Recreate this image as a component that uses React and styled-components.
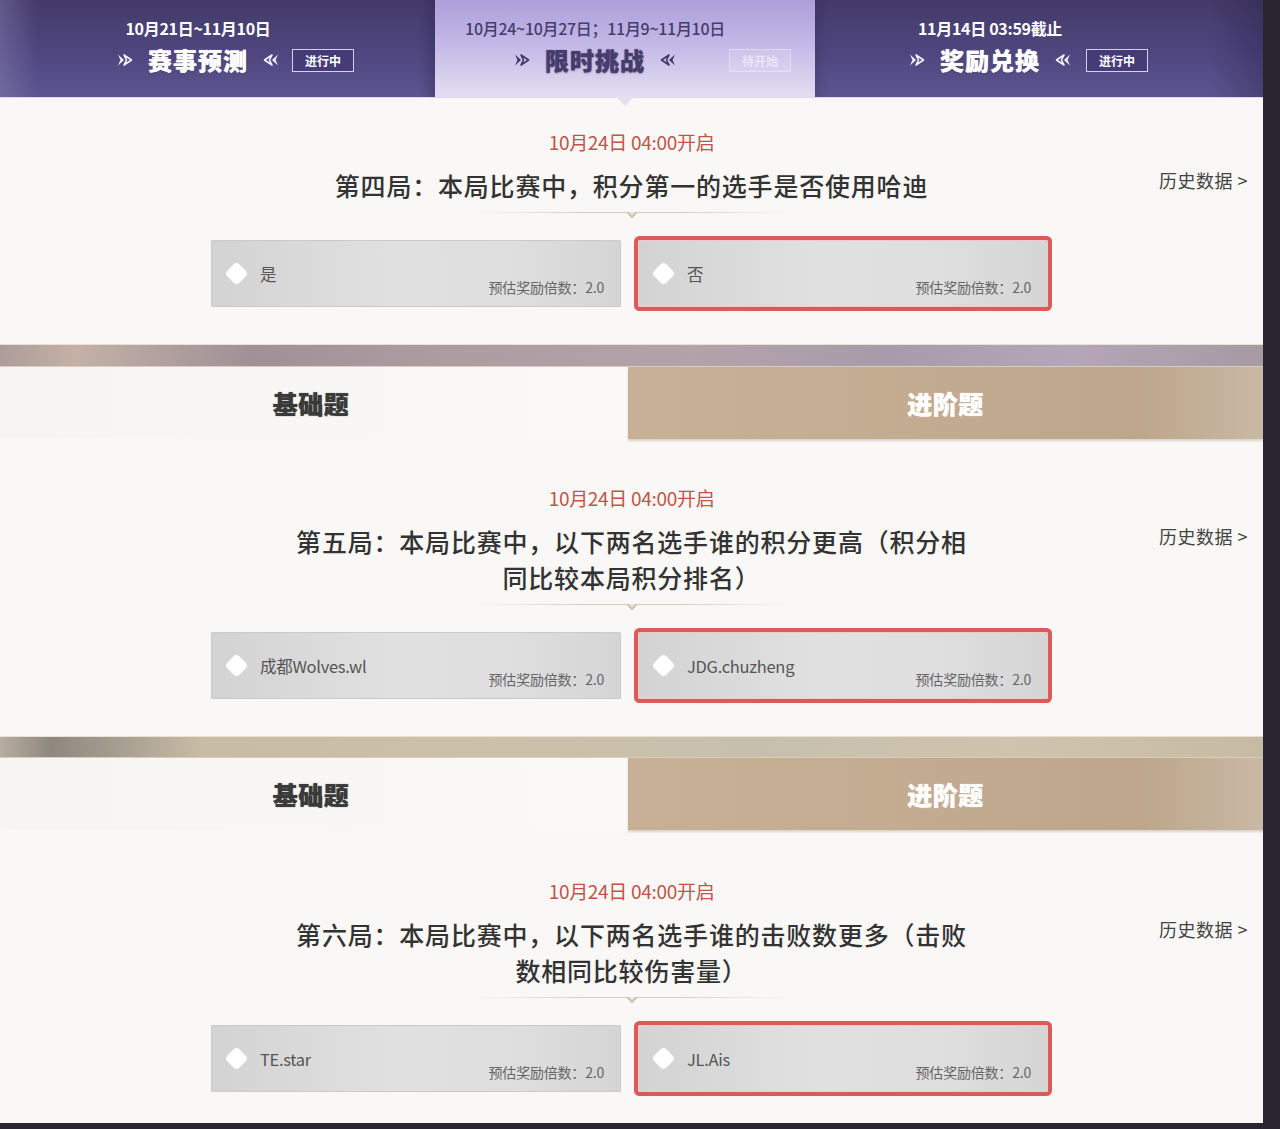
import React from "react";
import styled, { createGlobalStyle, css } from "styled-components";

const GlobalStyle = createGlobalStyle`
  html, body { margin: 0; padding: 0; background: #2a2630; }
  body { font-family: "Noto Sans CJK SC", "Noto Sans", sans-serif; }
  * { box-sizing: border-box; }
`;

const Page = styled.div`
  width: 1280px;
  height: 1129px;
  display: flex;
  background: #2a2630;
  overflow: hidden;
`;

const Main = styled.div`
  width: 1263px;
  height: 1123px;
  background: #f9f8f6;
  overflow: hidden;
  display: flex;
  flex-direction: column;
`;

const Header = styled.div`
  display: grid;
  grid-template-columns: 435px 380px 1fr;
  height: 98px;
  border-bottom: 1px solid #ddd8e6;
  flex-shrink: 0;
`;

const Tab = styled.div`
  position: relative;
  display: flex;
  flex-direction: column;
  align-items: center;
  padding-top: 17px;
  padding-right: ${(p) => p.$shift}px;
  ${(p) =>
    p.$active
      ? css`
          background: linear-gradient(180deg, #ae9fdb 0%, #c3b8e6 45%, #e2def1 100%);
          color: #463c6e;
        `
      : css`
          background:
            linear-gradient(90deg, ${p.$edgeL} 0, transparent ${p.$edgeLw}px, transparent calc(100% - ${p.$edgeRw}px), ${p.$edgeR} 100%),
            linear-gradient(180deg, #433a68 0%, #4f4680 55%, #5c5590 100%);
          color: #ffffff;
        `}
`;

const Pointer = styled.svg`
  position: absolute;
  left: 50%;
  bottom: -9px;
  transform: translateX(-50%);
  z-index: 2;
`;

const DateText = styled.div`
  font-size: 16px;
  line-height: 22px;
  font-weight: ${(p) => (p.$active ? 500 : 700)};
  letter-spacing: -0.3px;
  white-space: nowrap;
`;

const TitleRow = styled.div`
  position: relative;
  margin-top: 6px;
  height: 30px;
  display: flex;
  align-items: center;
  gap: 15px;
`;

const TabTitle = styled.div`
  font-size: 24px;
  line-height: 30px;
  font-weight: 900;
  letter-spacing: 1px;
  text-shadow: 0 0 1px currentColor, 0 1px 2px rgba(0, 0, 0, 0.25);
`;

const Badge = styled.div`
  position: absolute;
  left: calc(100% + ${(p) => p.$offset}px);
  top: 4px;
  width: 62px;
  height: 23px;
  display: flex;
  align-items: center;
  justify-content: center;
  font-size: 12px;
  font-weight: 700;
  ${(p) =>
    p.$muted
      ? css`
          border: 1px solid rgba(255, 255, 255, 0.35);
          background: rgba(255, 255, 255, 0.12);
          color: rgba(255, 255, 255, 0.55);
        `
      : css`
          border: 1px solid #d6cff0;
          background: rgba(62, 52, 110, 0.6);
          color: #ffffff;
        `}
`;

const Section = styled.div`
  padding-top: ${(p) => p.$pt}px;
  padding-bottom: ${(p) => p.$pb}px;
  display: flex;
  flex-direction: column;
  flex-shrink: 0;
`;

const TimeText = styled.div`
  text-align: center;
  font-size: 19px;
  line-height: 20px;
  color: #c25349;
  letter-spacing: -0.3px;
`;

const QuestionRow = styled.div`
  margin-top: 15px;
  display: grid;
  grid-template-columns: 1fr 684px 1fr;
`;

const QuestionText = styled.div`
  grid-column: 2;
  text-align: center;
  font-size: 25px;
  line-height: 36px;
  font-weight: 500;
  letter-spacing: 0.8px;
  color: #333;
`;

const History = styled.div`
  grid-column: 3;
  justify-self: end;
  align-self: start;
  margin-top: 1px;
  padding-right: 15px;
  font-size: 18px;
  line-height: 24px;
  letter-spacing: 0.5px;
  color: #444;
  white-space: nowrap;
`;

const Divider = styled.div`
  position: relative;
  margin: 8px auto 0;
  width: 320px;
  height: 8px;
  border-top: 1px solid transparent;
  background:
    linear-gradient(90deg, rgba(205, 195, 175, 0) 0%, #d7cdbb 35%, #d7cdbb 65%, rgba(205, 195, 175, 0) 100%) top / 100% 1px no-repeat;
  display: flex;
  justify-content: center;
`;

const Options = styled.div`
  margin-top: 21px;
  padding-right: 4px;
  display: flex;
  justify-content: center;
  gap: 17px;
`;

const Option = styled.div`
  width: 410px;
  height: 67px;
  display: grid;
  grid-template-columns: auto 1fr auto;
  align-items: center;
  padding: 0 16px 0 16px;
  background: linear-gradient(90deg, #d3d3d3 0%, #e1e1e1 45%, #dedede 75%, #d5d5d5 100%);
  border: 1px solid ${(p) => (p.$selected ? "#f1c9c9" : "#cacaca")};
  border-radius: ${(p) => (p.$selected ? "2px" : "1px")};
  box-shadow: ${(p) => (p.$selected ? "0 0 0 4px #db5b5b" : "none")};
`;

const Diamond = styled.div`
  width: 17px;
  height: 17px;
  background: #fff;
  border-radius: 4px;
  transform: rotate(45deg);
`;

const OptionLabel = styled.div`
  padding-left: 15px;
  font-size: 16.5px;
  color: #555;
  letter-spacing: -0.3px;
`;

const Reward = styled.div`
  align-self: end;
  margin-bottom: 9px;
  font-size: 14px;
  color: #666;
  letter-spacing: -0.2px;
`;

const Band = styled.div`
  height: ${(p) => p.$h}px;
  flex-shrink: 0;
  border-top: 1px solid #e9dfd2;
  border-bottom: 1px solid #d9cdbb;
  background: ${(p) =>
    p.$tone === "violet"
      ? "linear-gradient(90deg, #ad9c98 0%, #c4b2a6 6%, #b3a29f 12%, #9f9197 20%, #ab9da2 35%, #b2a3aa 55%, #a99bab 70%, #b5a5b8 85%, #a79aa3 100%)"
      : "linear-gradient(90deg, #b8ada0 0%, #8f8880 4%, #a59c90 9%, #c8bca4 16%, #cbc0a8 40%, #c7bfae 60%, #cfc4ad 80%, #c7baa3 100%)"};
`;

const LevelTabs = styled.div`
  display: grid;
  grid-template-columns: 628px 1fr;
  height: 72px;
  flex-shrink: 0;
  background: linear-gradient(90deg, #f6f5f3 0%, #faf9f8 50%, #f8f7f5 100%);
`;

const LevelTab = styled.div`
  display: flex;
  align-items: center;
  justify-content: center;
  padding-right: ${(p) => p.$pr}px;
  font-size: 25px;
  font-weight: 900;
  letter-spacing: 0.5px;
  ${(p) =>
    p.$active
      ? css`
          color: #fff;
          background: linear-gradient(90deg, #c8b096 0%, #c4ac91 40%, #bda68b 80%, #c9b8a4 100%);
          box-shadow: 0 2px 2px rgba(120, 100, 80, 0.25);
          text-shadow: 0 0 1px #fff;
        `
      : css`
          color: #3a3a3a;
          text-shadow: 0 0 1px #3a3a3a;
        `}
`;

const Arrow = ({ dir = "right", color }) => (
  <svg width="16" height="14" viewBox="0 0 16 14" style={{ transform: dir === "left" ? "scaleX(-1)" : "none" }}>
    <path d="M1 1.5 L7 7 L1 12.5 L3.5 7 Z" fill={color} />
    <path d="M7 2 L14.5 7 L7 12 L9.5 7 Z" fill="none" stroke={color} strokeWidth="1.6" strokeLinejoin="round" />
  </svg>
);

const DividerMark = () => (
  <svg width="14" height="8" viewBox="0 0 14 8">
    <path d="M1 0 L7 6.5 L13 0 Z" fill="#cdc2b2" />
    <path d="M4 0 L7 3.4 L10 0 Z" fill="#eee8df" />
  </svg>
);

const headerTabs = [
  { date: "10月21日~11月10日", title: "赛事预测", badge: "进行中", shift: 39, offset: 13, edgeL: "rgba(150,145,190,0.35)", edgeLw: 38, edgeR: "rgba(30,24,60,0.25)", edgeRw: 16 },
  { date: "10月24~10月27日；11月9~11月10日", title: "限时挑战", badge: "待开始", shift: 60, offset: 53, active: true },
  { date: "11月14日 03:59截止", title: "奖励兑换", badge: "进行中", shift: 98, offset: 15, edgeL: "rgba(30,24,60,0.15)", edgeLw: 14, edgeR: "rgba(30,24,60,0.3)", edgeRw: 53 },
];

const questions = [
  {
    pt: 34,
    pb: 37,
    text: "第四局：本局比赛中，积分第一的选手是否使用哈迪",
    options: ["是", "否"],
  },
  {
    pt: 49,
    pb: 37,
    text: "第五局：本局比赛中，以下两名选手谁的积分更高（积分相同比较本局积分排名）",
    options: ["成都Wolves.wl", "JDG.chuzheng"],
  },
  {
    pt: 51,
    pb: 31,
    text: "第六局：本局比赛中，以下两名选手谁的击败数更多（击败数相同比较伤害量）",
    options: ["TE.star", "JL.Ais"],
  },
];

const QuestionSection = ({ q }) => (
  <Section $pt={q.pt} $pb={q.pb}>
    <TimeText>10月24日 04:00开启</TimeText>
    <QuestionRow>
      <QuestionText>{q.text}</QuestionText>
      <History>历史数据 &gt;</History>
    </QuestionRow>
    <Divider>
      <DividerMark />
    </Divider>
    <Options>
      {q.options.map((o, i) => (
        <Option key={o} $selected={i === 1}>
          <Diamond />
          <OptionLabel>{o}</OptionLabel>
          <Reward>预估奖励倍数：2.0</Reward>
        </Option>
      ))}
    </Options>
  </Section>
);

const Levels = () => (
  <LevelTabs>
    <LevelTab $pr={6}>基础题</LevelTab>
    <LevelTab $active $pr={0}>进阶题</LevelTab>
  </LevelTabs>
);

export default function App() {
  return (
    <>
      <GlobalStyle />
      <Page>
        <Main>
          <Header>
            {headerTabs.map((t) => {
              const c = t.active ? "#3f3566" : "#f2f0fa";
              return (
                <Tab
                  key={t.title}
                  $active={t.active}
                  $shift={t.shift}
                  $edgeL={t.edgeL}
                  $edgeLw={t.edgeLw}
                  $edgeR={t.edgeR}
                  $edgeRw={t.edgeRw}
                >
                  <DateText $active={t.active}>{t.date}</DateText>
                  <TitleRow>
                    <Arrow color={c} />
                    <TabTitle>{t.title}</TabTitle>
                    <Arrow dir="left" color={c} />
                    <Badge $offset={t.offset} $muted={t.active}>
                      {t.badge}
                    </Badge>
                  </TitleRow>
                  {t.active && (
                    <Pointer width="20" height="10" viewBox="0 0 20 10">
                      <path d="M0 0 L10 10 L20 0 Z" fill="#e4e0ee" />
                    </Pointer>
                  )}
                </Tab>
              );
            })}
          </Header>
          <QuestionSection q={questions[0]} />
          <Band $h={23} $tone="violet" />
          <Levels />
          <QuestionSection q={questions[1]} />
          <Band $h={22} $tone="beige" />
          <Levels />
          <QuestionSection q={questions[2]} />
        </Main>
      </Page>
    </>
  );
}
